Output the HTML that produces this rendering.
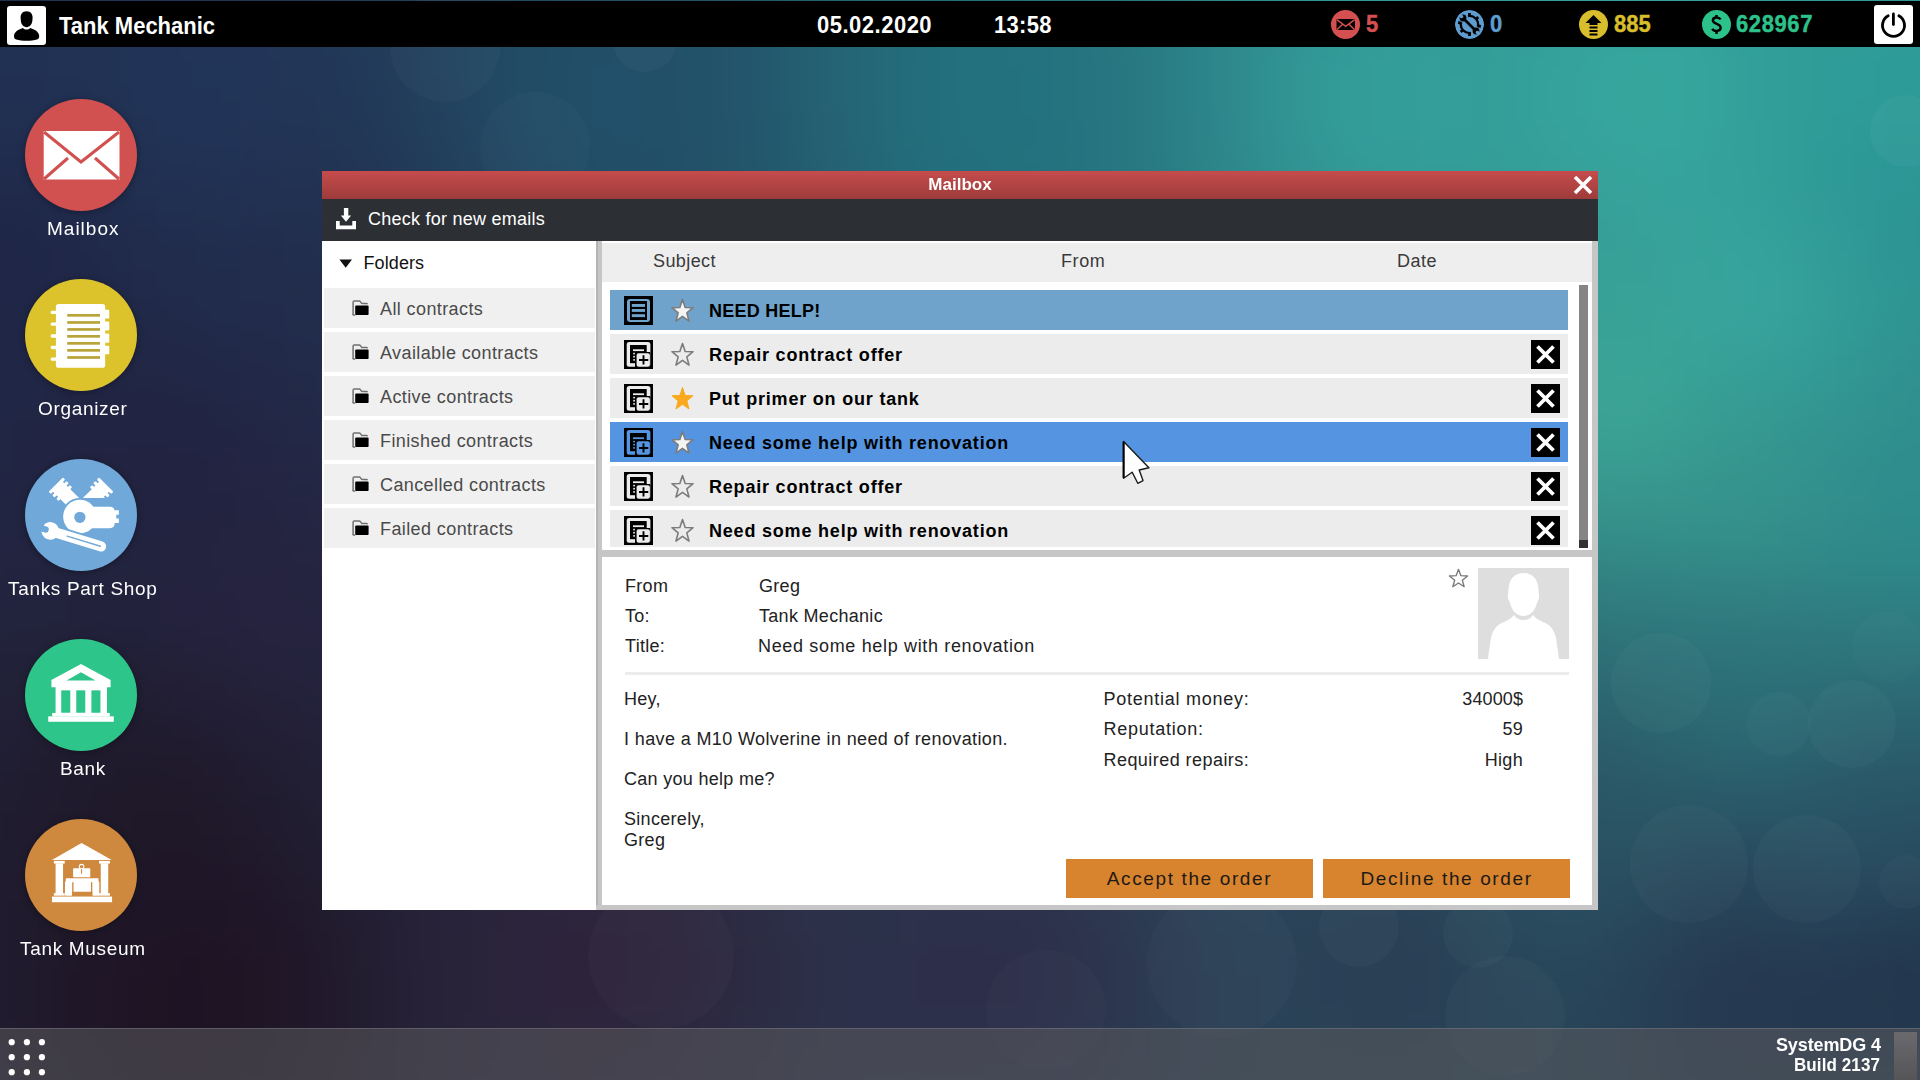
<!DOCTYPE html>
<html><head><meta charset="utf-8">
<style>
*{margin:0;padding:0;box-sizing:border-box}
html,body{width:1920px;height:1080px;overflow:hidden}
body{position:relative;font-family:"Liberation Sans",sans-serif;background:#1d2244}
.a{position:absolute}
svg{position:absolute;display:block}
.t{position:absolute;white-space:nowrap;line-height:1}
#bgg{position:absolute;left:0;top:0;width:1920px;height:1080px;filter:blur(45px)}
#bgg i{position:absolute;width:60px;height:60px}
#bgw{position:absolute;left:0;top:0;width:1920px;height:1080px;overflow:hidden}
.bk{position:absolute;border-radius:50%}
#topbar{left:0;top:1px;width:1920px;height:46px;background:#000}
#taskbar{left:0;top:1028px;width:1920px;height:52px;background:rgba(90,90,93,.56);border-top:1px solid rgba(130,130,140,.45)}
.icon{position:absolute;left:25px;width:112px;height:112px;border-radius:50%;box-shadow:0 1px 7px rgba(0,0,0,.35)}
.icon svg{left:0;top:0}
.lbl{position:absolute;color:#fff;font-size:19px;letter-spacing:.67px;white-space:nowrap;line-height:1}
.stat{position:absolute;top:13px;-webkit-text-stroke:.4px currentColor;transform:scaleY(1.06);transform-origin:0 0;font-size:22px;font-weight:bold;line-height:1;white-space:nowrap}
.row{position:absolute;left:610px;width:958px;overflow:hidden}
.ric{left:14px;top:6px}
.rst{left:60px;top:7.5px}
.rtx{position:absolute;left:99px;top:12px;font-size:18px;font-weight:bold;letter-spacing:.8px;color:#000;white-space:nowrap;line-height:1}
.rx{left:921px;top:6px}
.fitem{position:absolute;left:324px;width:271px;height:40px;background:#f0f0f0}
.fic{left:28px;top:12px}
.fitem span{position:absolute;left:56px;top:12px;font-size:18px;letter-spacing:.4px;color:#4a4a4a;white-space:nowrap;line-height:1}
.hd{position:absolute;top:252px;font-size:18px;letter-spacing:.4px;color:#3a3a3a;line-height:1;white-space:nowrap}
.dt{position:absolute;font-size:18px;color:#222;line-height:1;white-space:nowrap;letter-spacing:.3px}
.btn{position:absolute;top:859px;width:247px;height:39px;background:#d8832e;color:#1e1a16;font-size:19px;letter-spacing:1.62px;line-height:39px;text-align:center;white-space:nowrap}
</style></head><body>
<div id="bgw"><div id="bgg"><i style="left:-120px;top:-120px;background:#223252"></i><i style="left:-60px;top:-120px;background:#223253"></i><i style="left:0px;top:-120px;background:#223253"></i><i style="left:60px;top:-120px;background:#223354"></i><i style="left:120px;top:-120px;background:#223455"></i><i style="left:180px;top:-120px;background:#223656"></i><i style="left:240px;top:-120px;background:#223757"></i><i style="left:300px;top:-120px;background:#223a59"></i><i style="left:360px;top:-120px;background:#223e5b"></i><i style="left:420px;top:-120px;background:#23435e"></i><i style="left:480px;top:-120px;background:#234862"></i><i style="left:540px;top:-120px;background:#234c65"></i><i style="left:600px;top:-120px;background:#234f67"></i><i style="left:660px;top:-120px;background:#235269"></i><i style="left:720px;top:-120px;background:#24576c"></i><i style="left:780px;top:-120px;background:#255e70"></i><i style="left:840px;top:-120px;background:#256575"></i><i style="left:900px;top:-120px;background:#256a79"></i><i style="left:960px;top:-120px;background:#266e7b"></i><i style="left:1020px;top:-120px;background:#27717d"></i><i style="left:1080px;top:-120px;background:#287680"></i><i style="left:1140px;top:-120px;background:#2b7c84"></i><i style="left:1200px;top:-120px;background:#2d8488"></i><i style="left:1260px;top:-120px;background:#2f8b8d"></i><i style="left:1320px;top:-120px;background:#319190"></i><i style="left:1380px;top:-120px;background:#329492"></i><i style="left:1440px;top:-120px;background:#329693"></i><i style="left:1500px;top:-120px;background:#329894"></i><i style="left:1560px;top:-120px;background:#339a95"></i><i style="left:1620px;top:-120px;background:#339b96"></i><i style="left:1680px;top:-120px;background:#329a96"></i><i style="left:1740px;top:-120px;background:#319995"></i><i style="left:1800px;top:-120px;background:#309895"></i><i style="left:1860px;top:-120px;background:#2f9794"></i><i style="left:1920px;top:-120px;background:#2f9694"></i><i style="left:1980px;top:-120px;background:#2e9492"></i><i style="left:2040px;top:-120px;background:#2e9291"></i><i style="left:-120px;top:-60px;background:#213152"></i><i style="left:-60px;top:-60px;background:#213153"></i><i style="left:0px;top:-60px;background:#213253"></i><i style="left:60px;top:-60px;background:#223254"></i><i style="left:120px;top:-60px;background:#223455"></i><i style="left:180px;top:-60px;background:#223557"></i><i style="left:240px;top:-60px;background:#223657"></i><i style="left:300px;top:-60px;background:#223958"></i><i style="left:360px;top:-60px;background:#223d5b"></i><i style="left:420px;top:-60px;background:#22445f"></i><i style="left:480px;top:-60px;background:#224964"></i><i style="left:540px;top:-60px;background:#224d66"></i><i style="left:600px;top:-60px;background:#224f68"></i><i style="left:660px;top:-60px;background:#235169"></i><i style="left:720px;top:-60px;background:#24566c"></i><i style="left:780px;top:-60px;background:#245e71"></i><i style="left:840px;top:-60px;background:#246777"></i><i style="left:900px;top:-60px;background:#246d7b"></i><i style="left:960px;top:-60px;background:#24707d"></i><i style="left:1020px;top:-60px;background:#25727e"></i><i style="left:1080px;top:-60px;background:#277580"></i><i style="left:1140px;top:-60px;background:#2a7d84"></i><i style="left:1200px;top:-60px;background:#2e878a"></i><i style="left:1260px;top:-60px;background:#309090"></i><i style="left:1320px;top:-60px;background:#329695"></i><i style="left:1380px;top:-60px;background:#329996"></i><i style="left:1440px;top:-60px;background:#339a96"></i><i style="left:1500px;top:-60px;background:#339c97"></i><i style="left:1560px;top:-60px;background:#349e99"></i><i style="left:1620px;top:-60px;background:#34a099"></i><i style="left:1680px;top:-60px;background:#339e99"></i><i style="left:1740px;top:-60px;background:#319c97"></i><i style="left:1800px;top:-60px;background:#2f9a96"></i><i style="left:1860px;top:-60px;background:#2e9996"></i><i style="left:1920px;top:-60px;background:#2e9896"></i><i style="left:1980px;top:-60px;background:#2e9694"></i><i style="left:2040px;top:-60px;background:#2e9492"></i><i style="left:-120px;top:0px;background:#213152"></i><i style="left:-60px;top:0px;background:#213153"></i><i style="left:0px;top:0px;background:#213153"></i><i style="left:60px;top:0px;background:#213254"></i><i style="left:120px;top:0px;background:#213457"></i><i style="left:180px;top:0px;background:#223558"></i><i style="left:240px;top:0px;background:#223558"></i><i style="left:300px;top:0px;background:#223758"></i><i style="left:360px;top:0px;background:#223c5a"></i><i style="left:420px;top:0px;background:#224460"></i><i style="left:480px;top:0px;background:#224b65"></i><i style="left:540px;top:0px;background:#224e68"></i><i style="left:600px;top:0px;background:#224f69"></i><i style="left:660px;top:0px;background:#225069"></i><i style="left:720px;top:0px;background:#23556c"></i><i style="left:780px;top:0px;background:#245f71"></i><i style="left:840px;top:0px;background:#246979"></i><i style="left:900px;top:0px;background:#236f7d"></i><i style="left:960px;top:0px;background:#23717f"></i><i style="left:1020px;top:0px;background:#24727f"></i><i style="left:1080px;top:0px;background:#267480"></i><i style="left:1140px;top:0px;background:#2a7d85"></i><i style="left:1200px;top:0px;background:#2e898c"></i><i style="left:1260px;top:0px;background:#319594"></i><i style="left:1320px;top:0px;background:#339c99"></i><i style="left:1380px;top:0px;background:#339e9a"></i><i style="left:1440px;top:0px;background:#339d99"></i><i style="left:1500px;top:0px;background:#349e99"></i><i style="left:1560px;top:0px;background:#35a49c"></i><i style="left:1620px;top:0px;background:#36a69d"></i><i style="left:1680px;top:0px;background:#34a39c"></i><i style="left:1740px;top:0px;background:#319e98"></i><i style="left:1800px;top:0px;background:#2f9b98"></i><i style="left:1860px;top:0px;background:#2e9c98"></i><i style="left:1920px;top:0px;background:#2e9b97"></i><i style="left:1980px;top:0px;background:#2e9895"></i><i style="left:2040px;top:0px;background:#2e9593"></i><i style="left:-120px;top:60px;background:#213051"></i><i style="left:-60px;top:60px;background:#213153"></i><i style="left:0px;top:60px;background:#213153"></i><i style="left:60px;top:60px;background:#213254"></i><i style="left:120px;top:60px;background:#213558"></i><i style="left:180px;top:60px;background:#213559"></i><i style="left:240px;top:60px;background:#223558"></i><i style="left:300px;top:60px;background:#223657"></i><i style="left:360px;top:60px;background:#223b59"></i><i style="left:420px;top:60px;background:#224460"></i><i style="left:480px;top:60px;background:#224c66"></i><i style="left:540px;top:60px;background:#224f69"></i><i style="left:600px;top:60px;background:#224f69"></i><i style="left:660px;top:60px;background:#225069"></i><i style="left:720px;top:60px;background:#23556b"></i><i style="left:780px;top:60px;background:#245f72"></i><i style="left:840px;top:60px;background:#246a79"></i><i style="left:900px;top:60px;background:#23707e"></i><i style="left:960px;top:60px;background:#23717f"></i><i style="left:1020px;top:60px;background:#23727f"></i><i style="left:1080px;top:60px;background:#257480"></i><i style="left:1140px;top:60px;background:#297c84"></i><i style="left:1200px;top:60px;background:#2e8a8d"></i><i style="left:1260px;top:60px;background:#329795"></i><i style="left:1320px;top:60px;background:#339e9b"></i><i style="left:1380px;top:60px;background:#339f9b"></i><i style="left:1440px;top:60px;background:#339e9a"></i><i style="left:1500px;top:60px;background:#34a09a"></i><i style="left:1560px;top:60px;background:#36a79e"></i><i style="left:1620px;top:60px;background:#36a99f"></i><i style="left:1680px;top:60px;background:#35a69d"></i><i style="left:1740px;top:60px;background:#319e99"></i><i style="left:1800px;top:60px;background:#2e9c98"></i><i style="left:1860px;top:60px;background:#2d9d99"></i><i style="left:1920px;top:60px;background:#2d9c98"></i><i style="left:1980px;top:60px;background:#2d9896"></i><i style="left:2040px;top:60px;background:#2d9593"></i><i style="left:-120px;top:120px;background:#212d4e"></i><i style="left:-60px;top:120px;background:#212e4f"></i><i style="left:0px;top:120px;background:#212e50"></i><i style="left:60px;top:120px;background:#212f51"></i><i style="left:120px;top:120px;background:#213356"></i><i style="left:180px;top:120px;background:#213458"></i><i style="left:240px;top:120px;background:#223356"></i><i style="left:300px;top:120px;background:#223454"></i><i style="left:360px;top:120px;background:#223857"></i><i style="left:420px;top:120px;background:#22415d"></i><i style="left:480px;top:120px;background:#224a65"></i><i style="left:540px;top:120px;background:#224f69"></i><i style="left:600px;top:120px;background:#224f69"></i><i style="left:660px;top:120px;background:#225069"></i><i style="left:720px;top:120px;background:#23546b"></i><i style="left:780px;top:120px;background:#245e71"></i><i style="left:840px;top:120px;background:#246978"></i><i style="left:900px;top:120px;background:#236f7e"></i><i style="left:960px;top:120px;background:#23717f"></i><i style="left:1020px;top:120px;background:#23717f"></i><i style="left:1080px;top:120px;background:#267480"></i><i style="left:1140px;top:120px;background:#2a7c84"></i><i style="left:1200px;top:120px;background:#2e898c"></i><i style="left:1260px;top:120px;background:#329594"></i><i style="left:1320px;top:120px;background:#339d99"></i><i style="left:1380px;top:120px;background:#339e9b"></i><i style="left:1440px;top:120px;background:#339d99"></i><i style="left:1500px;top:120px;background:#349f99"></i><i style="left:1560px;top:120px;background:#36a49c"></i><i style="left:1620px;top:120px;background:#36a79e"></i><i style="left:1680px;top:120px;background:#35a49c"></i><i style="left:1740px;top:120px;background:#329e98"></i><i style="left:1800px;top:120px;background:#2e9a97"></i><i style="left:1860px;top:120px;background:#2c9896"></i><i style="left:1920px;top:120px;background:#2b9795"></i><i style="left:1980px;top:120px;background:#2c9695"></i><i style="left:2040px;top:120px;background:#2d9493"></i><i style="left:-120px;top:180px;background:#20294a"></i><i style="left:-60px;top:180px;background:#1f2748"></i><i style="left:0px;top:180px;background:#1f2647"></i><i style="left:60px;top:180px;background:#202a4b"></i><i style="left:120px;top:180px;background:#212e4f"></i><i style="left:180px;top:180px;background:#212f50"></i><i style="left:240px;top:180px;background:#222f4f"></i><i style="left:300px;top:180px;background:#223050"></i><i style="left:360px;top:180px;background:#223553"></i><i style="left:420px;top:180px;background:#223d59"></i><i style="left:480px;top:180px;background:#224560"></i><i style="left:540px;top:180px;background:#224b65"></i><i style="left:600px;top:180px;background:#224d66"></i><i style="left:660px;top:180px;background:#234f67"></i><i style="left:720px;top:180px;background:#245469"></i><i style="left:780px;top:180px;background:#245c6f"></i><i style="left:840px;top:180px;background:#246575"></i><i style="left:900px;top:180px;background:#246c7b"></i><i style="left:960px;top:180px;background:#246f7d"></i><i style="left:1020px;top:180px;background:#25717e"></i><i style="left:1080px;top:180px;background:#27747f"></i><i style="left:1140px;top:180px;background:#2b7c83"></i><i style="left:1200px;top:180px;background:#2e8689"></i><i style="left:1260px;top:180px;background:#319090"></i><i style="left:1320px;top:180px;background:#329795"></i><i style="left:1380px;top:180px;background:#339a96"></i><i style="left:1440px;top:180px;background:#349a96"></i><i style="left:1500px;top:180px;background:#359c96"></i><i style="left:1560px;top:180px;background:#35a098"></i><i style="left:1620px;top:180px;background:#35a19a"></i><i style="left:1680px;top:180px;background:#35a19a"></i><i style="left:1740px;top:180px;background:#339f9a"></i><i style="left:1800px;top:180px;background:#2e9996"></i><i style="left:1860px;top:180px;background:#2a9494"></i><i style="left:1920px;top:180px;background:#2a9494"></i><i style="left:1980px;top:180px;background:#2c9493"></i><i style="left:2040px;top:180px;background:#2d9392"></i><i style="left:-120px;top:240px;background:#1f2848"></i><i style="left:-60px;top:240px;background:#1f2546"></i><i style="left:0px;top:240px;background:#1f2546"></i><i style="left:60px;top:240px;background:#202748"></i><i style="left:120px;top:240px;background:#212b4b"></i><i style="left:180px;top:240px;background:#212c4c"></i><i style="left:240px;top:240px;background:#222c4c"></i><i style="left:300px;top:240px;background:#222d4d"></i><i style="left:360px;top:240px;background:#223150"></i><i style="left:420px;top:240px;background:#223854"></i><i style="left:480px;top:240px;background:#233f5a"></i><i style="left:540px;top:240px;background:#23455f"></i><i style="left:600px;top:240px;background:#234962"></i><i style="left:660px;top:240px;background:#234d64"></i><i style="left:720px;top:240px;background:#245267"></i><i style="left:780px;top:240px;background:#25596c"></i><i style="left:840px;top:240px;background:#256171"></i><i style="left:900px;top:240px;background:#256776"></i><i style="left:960px;top:240px;background:#266c79"></i><i style="left:1020px;top:240px;background:#276f7b"></i><i style="left:1080px;top:240px;background:#29737d"></i><i style="left:1140px;top:240px;background:#2b7a81"></i><i style="left:1200px;top:240px;background:#2e8286"></i><i style="left:1260px;top:240px;background:#308a8b"></i><i style="left:1320px;top:240px;background:#32908f"></i><i style="left:1380px;top:240px;background:#339491"></i><i style="left:1440px;top:240px;background:#349792"></i><i style="left:1500px;top:240px;background:#369b94"></i><i style="left:1560px;top:240px;background:#379e96"></i><i style="left:1620px;top:240px;background:#37a199"></i><i style="left:1680px;top:240px;background:#37a59d"></i><i style="left:1740px;top:240px;background:#37a69e"></i><i style="left:1800px;top:240px;background:#329d98"></i><i style="left:1860px;top:240px;background:#2d9694"></i><i style="left:1920px;top:240px;background:#2c9493"></i><i style="left:1980px;top:240px;background:#2d9392"></i><i style="left:2040px;top:240px;background:#2e9090"></i><i style="left:-120px;top:300px;background:#202847"></i><i style="left:-60px;top:300px;background:#1f2647"></i><i style="left:0px;top:300px;background:#1f2646"></i><i style="left:60px;top:300px;background:#202747"></i><i style="left:120px;top:300px;background:#212948"></i><i style="left:180px;top:300px;background:#212b4b"></i><i style="left:240px;top:300px;background:#222b4b"></i><i style="left:300px;top:300px;background:#222c4b"></i><i style="left:360px;top:300px;background:#222f4d"></i><i style="left:420px;top:300px;background:#223451"></i><i style="left:480px;top:300px;background:#233a55"></i><i style="left:540px;top:300px;background:#23405a"></i><i style="left:600px;top:300px;background:#24455d"></i><i style="left:660px;top:300px;background:#244a61"></i><i style="left:720px;top:300px;background:#254f64"></i><i style="left:780px;top:300px;background:#265669"></i><i style="left:840px;top:300px;background:#265c6d"></i><i style="left:900px;top:300px;background:#276272"></i><i style="left:960px;top:300px;background:#276775"></i><i style="left:1020px;top:300px;background:#286c78"></i><i style="left:1080px;top:300px;background:#2a717b"></i><i style="left:1140px;top:300px;background:#2c777e"></i><i style="left:1200px;top:300px;background:#2e7e82"></i><i style="left:1260px;top:300px;background:#308586"></i><i style="left:1320px;top:300px;background:#328b8a"></i><i style="left:1380px;top:300px;background:#33908d"></i><i style="left:1440px;top:300px;background:#369690"></i><i style="left:1500px;top:300px;background:#389d93"></i><i style="left:1560px;top:300px;background:#3aa296"></i><i style="left:1620px;top:300px;background:#39a297"></i><i style="left:1680px;top:300px;background:#37a49c"></i><i style="left:1740px;top:300px;background:#37a69e"></i><i style="left:1800px;top:300px;background:#349d98"></i><i style="left:1860px;top:300px;background:#309693"></i><i style="left:1920px;top:300px;background:#2f9291"></i><i style="left:1980px;top:300px;background:#2e908f"></i><i style="left:2040px;top:300px;background:#2e8d8d"></i><i style="left:-120px;top:360px;background:#202847"></i><i style="left:-60px;top:360px;background:#202746"></i><i style="left:0px;top:360px;background:#202645"></i><i style="left:60px;top:360px;background:#212543"></i><i style="left:120px;top:360px;background:#212442"></i><i style="left:180px;top:360px;background:#212645"></i><i style="left:240px;top:360px;background:#222948"></i><i style="left:300px;top:360px;background:#222b49"></i><i style="left:360px;top:360px;background:#222d4b"></i><i style="left:420px;top:360px;background:#23314e"></i><i style="left:480px;top:360px;background:#233751"></i><i style="left:540px;top:360px;background:#243c55"></i><i style="left:600px;top:360px;background:#244159"></i><i style="left:660px;top:360px;background:#25465d"></i><i style="left:720px;top:360px;background:#264c61"></i><i style="left:780px;top:360px;background:#265265"></i><i style="left:840px;top:360px;background:#275869"></i><i style="left:900px;top:360px;background:#285e6d"></i><i style="left:960px;top:360px;background:#296371"></i><i style="left:1020px;top:360px;background:#2a6874"></i><i style="left:1080px;top:360px;background:#2b6d77"></i><i style="left:1140px;top:360px;background:#2d737b"></i><i style="left:1200px;top:360px;background:#2e797e"></i><i style="left:1260px;top:360px;background:#307f82"></i><i style="left:1320px;top:360px;background:#328686"></i><i style="left:1380px;top:360px;background:#348d8a"></i><i style="left:1440px;top:360px;background:#36958f"></i><i style="left:1500px;top:360px;background:#3a9f94"></i><i style="left:1560px;top:360px;background:#3da797"></i><i style="left:1620px;top:360px;background:#3da697"></i><i style="left:1680px;top:360px;background:#379e95"></i><i style="left:1740px;top:360px;background:#359b95"></i><i style="left:1800px;top:360px;background:#339692"></i><i style="left:1860px;top:360px;background:#30918f"></i><i style="left:1920px;top:360px;background:#2f8e8d"></i><i style="left:1980px;top:360px;background:#2f8d8c"></i><i style="left:2040px;top:360px;background:#2e8a8b"></i><i style="left:-120px;top:420px;background:#212846"></i><i style="left:-60px;top:420px;background:#212745"></i><i style="left:0px;top:420px;background:#212543"></i><i style="left:60px;top:420px;background:#212341"></i><i style="left:120px;top:420px;background:#212240"></i><i style="left:180px;top:420px;background:#212341"></i><i style="left:240px;top:420px;background:#222644"></i><i style="left:300px;top:420px;background:#222846"></i><i style="left:360px;top:420px;background:#232b48"></i><i style="left:420px;top:420px;background:#232f4a"></i><i style="left:480px;top:420px;background:#24344e"></i><i style="left:540px;top:420px;background:#243952"></i><i style="left:600px;top:420px;background:#253e55"></i><i style="left:660px;top:420px;background:#254359"></i><i style="left:720px;top:420px;background:#26485d"></i><i style="left:780px;top:420px;background:#274e61"></i><i style="left:840px;top:420px;background:#285465"></i><i style="left:900px;top:420px;background:#285969"></i><i style="left:960px;top:420px;background:#295e6c"></i><i style="left:1020px;top:420px;background:#2a6370"></i><i style="left:1080px;top:420px;background:#2b6973"></i><i style="left:1140px;top:420px;background:#2d6e77"></i><i style="left:1200px;top:420px;background:#2e747a"></i><i style="left:1260px;top:420px;background:#2f7a7e"></i><i style="left:1320px;top:420px;background:#318082"></i><i style="left:1380px;top:420px;background:#338786"></i><i style="left:1440px;top:420px;background:#36908b"></i><i style="left:1500px;top:420px;background:#399b91"></i><i style="left:1560px;top:420px;background:#3ca395"></i><i style="left:1620px;top:420px;background:#3aa094"></i><i style="left:1680px;top:420px;background:#36978f"></i><i style="left:1740px;top:420px;background:#35958e"></i><i style="left:1800px;top:420px;background:#32918d"></i><i style="left:1860px;top:420px;background:#2e8e8d"></i><i style="left:1920px;top:420px;background:#2e8d8d"></i><i style="left:1980px;top:420px;background:#2e8b8b"></i><i style="left:2040px;top:420px;background:#2e8788"></i><i style="left:-120px;top:480px;background:#212744"></i><i style="left:-60px;top:480px;background:#212643"></i><i style="left:0px;top:480px;background:#212542"></i><i style="left:60px;top:480px;background:#212341"></i><i style="left:120px;top:480px;background:#212240"></i><i style="left:180px;top:480px;background:#222340"></i><i style="left:240px;top:480px;background:#242441"></i><i style="left:300px;top:480px;background:#242642"></i><i style="left:360px;top:480px;background:#232945"></i><i style="left:420px;top:480px;background:#242d47"></i><i style="left:480px;top:480px;background:#24314b"></i><i style="left:540px;top:480px;background:#25364e"></i><i style="left:600px;top:480px;background:#253b52"></i><i style="left:660px;top:480px;background:#264056"></i><i style="left:720px;top:480px;background:#27455a"></i><i style="left:780px;top:480px;background:#274a5d"></i><i style="left:840px;top:480px;background:#284f61"></i><i style="left:900px;top:480px;background:#295465"></i><i style="left:960px;top:480px;background:#2a5968"></i><i style="left:1020px;top:480px;background:#2b5e6c"></i><i style="left:1080px;top:480px;background:#2c636f"></i><i style="left:1140px;top:480px;background:#2d6872"></i><i style="left:1200px;top:480px;background:#2e6e76"></i><i style="left:1260px;top:480px;background:#2f7379"></i><i style="left:1320px;top:480px;background:#30797d"></i><i style="left:1380px;top:480px;background:#328081"></i><i style="left:1440px;top:480px;background:#338785"></i><i style="left:1500px;top:480px;background:#358f8a"></i><i style="left:1560px;top:480px;background:#37948d"></i><i style="left:1620px;top:480px;background:#36938c"></i><i style="left:1680px;top:480px;background:#35948d"></i><i style="left:1740px;top:480px;background:#35958d"></i><i style="left:1800px;top:480px;background:#318e8c"></i><i style="left:1860px;top:480px;background:#2e8d8d"></i><i style="left:1920px;top:480px;background:#2e8d8d"></i><i style="left:1980px;top:480px;background:#2e898a"></i><i style="left:2040px;top:480px;background:#2e8486"></i><i style="left:-120px;top:540px;background:#212642"></i><i style="left:-60px;top:540px;background:#212540"></i><i style="left:0px;top:540px;background:#222440"></i><i style="left:60px;top:540px;background:#22233f"></i><i style="left:120px;top:540px;background:#23233f"></i><i style="left:180px;top:540px;background:#252340"></i><i style="left:240px;top:540px;background:#252340"></i><i style="left:300px;top:540px;background:#252440"></i><i style="left:360px;top:540px;background:#242742"></i><i style="left:420px;top:540px;background:#242b45"></i><i style="left:480px;top:540px;background:#242f48"></i><i style="left:540px;top:540px;background:#25334b"></i><i style="left:600px;top:540px;background:#26384f"></i><i style="left:660px;top:540px;background:#273c52"></i><i style="left:720px;top:540px;background:#274156"></i><i style="left:780px;top:540px;background:#28465a"></i><i style="left:840px;top:540px;background:#294b5d"></i><i style="left:900px;top:540px;background:#294f61"></i><i style="left:960px;top:540px;background:#2a5464"></i><i style="left:1020px;top:540px;background:#2b5967"></i><i style="left:1080px;top:540px;background:#2c5d6b"></i><i style="left:1140px;top:540px;background:#2c626e"></i><i style="left:1200px;top:540px;background:#2d6771"></i><i style="left:1260px;top:540px;background:#2e6c74"></i><i style="left:1320px;top:540px;background:#2f7177"></i><i style="left:1380px;top:540px;background:#30767a"></i><i style="left:1440px;top:540px;background:#317b7e"></i><i style="left:1500px;top:540px;background:#328081"></i><i style="left:1560px;top:540px;background:#328483"></i><i style="left:1620px;top:540px;background:#328685"></i><i style="left:1680px;top:540px;background:#338a87"></i><i style="left:1740px;top:540px;background:#338b88"></i><i style="left:1800px;top:540px;background:#308787"></i><i style="left:1860px;top:540px;background:#2e8989"></i><i style="left:1920px;top:540px;background:#2e8889"></i><i style="left:1980px;top:540px;background:#2e8386"></i><i style="left:2040px;top:540px;background:#2e7f82"></i><i style="left:-120px;top:600px;background:#21253f"></i><i style="left:-60px;top:600px;background:#21243d"></i><i style="left:0px;top:600px;background:#22233c"></i><i style="left:60px;top:600px;background:#22223b"></i><i style="left:120px;top:600px;background:#23223c"></i><i style="left:180px;top:600px;background:#25223f"></i><i style="left:240px;top:600px;background:#25233f"></i><i style="left:300px;top:600px;background:#25233f"></i><i style="left:360px;top:600px;background:#242640"></i><i style="left:420px;top:600px;background:#242943"></i><i style="left:480px;top:600px;background:#252d46"></i><i style="left:540px;top:600px;background:#263149"></i><i style="left:600px;top:600px;background:#27354c"></i><i style="left:660px;top:600px;background:#27394f"></i><i style="left:720px;top:600px;background:#283d53"></i><i style="left:780px;top:600px;background:#294256"></i><i style="left:840px;top:600px;background:#294659"></i><i style="left:900px;top:600px;background:#2a4a5c"></i><i style="left:960px;top:600px;background:#2a4e5f"></i><i style="left:1020px;top:600px;background:#2b5263"></i><i style="left:1080px;top:600px;background:#2c5766"></i><i style="left:1140px;top:600px;background:#2c5c69"></i><i style="left:1200px;top:600px;background:#2d606c"></i><i style="left:1260px;top:600px;background:#2d646f"></i><i style="left:1320px;top:600px;background:#2e6871"></i><i style="left:1380px;top:600px;background:#2e6b73"></i><i style="left:1440px;top:600px;background:#2e6f76"></i><i style="left:1500px;top:600px;background:#2f7278"></i><i style="left:1560px;top:600px;background:#2f7479"></i><i style="left:1620px;top:600px;background:#2e767b"></i><i style="left:1680px;top:600px;background:#2e757b"></i><i style="left:1740px;top:600px;background:#2d757b"></i><i style="left:1800px;top:600px;background:#2e787d"></i><i style="left:1860px;top:600px;background:#2e7a7f"></i><i style="left:1920px;top:600px;background:#2d7b7f"></i><i style="left:1980px;top:600px;background:#2d797e"></i><i style="left:2040px;top:600px;background:#2d767c"></i><i style="left:-120px;top:660px;background:#21243c"></i><i style="left:-60px;top:660px;background:#212239"></i><i style="left:0px;top:660px;background:#212036"></i><i style="left:60px;top:660px;background:#211e34"></i><i style="left:120px;top:660px;background:#211e34"></i><i style="left:180px;top:660px;background:#232038"></i><i style="left:240px;top:660px;background:#24223c"></i><i style="left:300px;top:660px;background:#24233d"></i><i style="left:360px;top:660px;background:#24253e"></i><i style="left:420px;top:660px;background:#252841"></i><i style="left:480px;top:660px;background:#262b43"></i><i style="left:540px;top:660px;background:#272e46"></i><i style="left:600px;top:660px;background:#283248"></i><i style="left:660px;top:660px;background:#28354c"></i><i style="left:720px;top:660px;background:#29394f"></i><i style="left:780px;top:660px;background:#293d52"></i><i style="left:840px;top:660px;background:#2a4155"></i><i style="left:900px;top:660px;background:#2a4458"></i><i style="left:960px;top:660px;background:#2b475b"></i><i style="left:1020px;top:660px;background:#2b4b5e"></i><i style="left:1080px;top:660px;background:#2b5061"></i><i style="left:1140px;top:660px;background:#2c5564"></i><i style="left:1200px;top:660px;background:#2c5967"></i><i style="left:1260px;top:660px;background:#2c5c69"></i><i style="left:1320px;top:660px;background:#2c5f6b"></i><i style="left:1380px;top:660px;background:#2c616c"></i><i style="left:1440px;top:660px;background:#2d636e"></i><i style="left:1500px;top:660px;background:#2c656f"></i><i style="left:1560px;top:660px;background:#2c6771"></i><i style="left:1620px;top:660px;background:#2c6b73"></i><i style="left:1680px;top:660px;background:#2c6f77"></i><i style="left:1740px;top:660px;background:#2c6f77"></i><i style="left:1800px;top:660px;background:#2c6d76"></i><i style="left:1860px;top:660px;background:#2c6b74"></i><i style="left:1920px;top:660px;background:#2c6b75"></i><i style="left:1980px;top:660px;background:#2c6c75"></i><i style="left:2040px;top:660px;background:#2c6c75"></i><i style="left:-120px;top:720px;background:#212239"></i><i style="left:-60px;top:720px;background:#212035"></i><i style="left:0px;top:720px;background:#201d31"></i><i style="left:60px;top:720px;background:#1f1a2c"></i><i style="left:120px;top:720px;background:#1f1929"></i><i style="left:180px;top:720px;background:#201a2c"></i><i style="left:240px;top:720px;background:#211e33"></i><i style="left:300px;top:720px;background:#232138"></i><i style="left:360px;top:720px;background:#24243b"></i><i style="left:420px;top:720px;background:#25273e"></i><i style="left:480px;top:720px;background:#272941"></i><i style="left:540px;top:720px;background:#282c43"></i><i style="left:600px;top:720px;background:#292e45"></i><i style="left:660px;top:720px;background:#293148"></i><i style="left:720px;top:720px;background:#2a354b"></i><i style="left:780px;top:720px;background:#2a394f"></i><i style="left:840px;top:720px;background:#2b3c52"></i><i style="left:900px;top:720px;background:#2b3e54"></i><i style="left:960px;top:720px;background:#2b4056"></i><i style="left:1020px;top:720px;background:#2c4458"></i><i style="left:1080px;top:720px;background:#2c495c"></i><i style="left:1140px;top:720px;background:#2c4e5f"></i><i style="left:1200px;top:720px;background:#2b5262"></i><i style="left:1260px;top:720px;background:#2b5463"></i><i style="left:1320px;top:720px;background:#2b5664"></i><i style="left:1380px;top:720px;background:#2b5766"></i><i style="left:1440px;top:720px;background:#2b5967"></i><i style="left:1500px;top:720px;background:#2b5a68"></i><i style="left:1560px;top:720px;background:#2b5a68"></i><i style="left:1620px;top:720px;background:#2b5f6b"></i><i style="left:1680px;top:720px;background:#2b6872"></i><i style="left:1740px;top:720px;background:#2b6a74"></i><i style="left:1800px;top:720px;background:#2b616e"></i><i style="left:1860px;top:720px;background:#2a5c6b"></i><i style="left:1920px;top:720px;background:#2a5d6b"></i><i style="left:1980px;top:720px;background:#2a5f6c"></i><i style="left:2040px;top:720px;background:#2a616d"></i><i style="left:-120px;top:780px;background:#212136"></i><i style="left:-60px;top:780px;background:#201e32"></i><i style="left:0px;top:780px;background:#201b2e"></i><i style="left:60px;top:780px;background:#1f192a"></i><i style="left:120px;top:780px;background:#1f1828"></i><i style="left:180px;top:780px;background:#1f1829"></i><i style="left:240px;top:780px;background:#201b2e"></i><i style="left:300px;top:780px;background:#221f33"></i><i style="left:360px;top:780px;background:#242238"></i><i style="left:420px;top:780px;background:#26253c"></i><i style="left:480px;top:780px;background:#28273e"></i><i style="left:540px;top:780px;background:#2a2840"></i><i style="left:600px;top:780px;background:#2b2a41"></i><i style="left:660px;top:780px;background:#2b2d44"></i><i style="left:720px;top:780px;background:#2b3148"></i><i style="left:780px;top:780px;background:#2b354c"></i><i style="left:840px;top:780px;background:#2b374e"></i><i style="left:900px;top:780px;background:#2c3850"></i><i style="left:960px;top:780px;background:#2c3950"></i><i style="left:1020px;top:780px;background:#2c3b53"></i><i style="left:1080px;top:780px;background:#2c4156"></i><i style="left:1140px;top:780px;background:#2b475a"></i><i style="left:1200px;top:780px;background:#2b4b5d"></i><i style="left:1260px;top:780px;background:#2b4c5e"></i><i style="left:1320px;top:780px;background:#2a4d5e"></i><i style="left:1380px;top:780px;background:#2a4e5f"></i><i style="left:1440px;top:780px;background:#2a5162"></i><i style="left:1500px;top:780px;background:#2a5463"></i><i style="left:1560px;top:780px;background:#2a5464"></i><i style="left:1620px;top:780px;background:#2a5464"></i><i style="left:1680px;top:780px;background:#2a5666"></i><i style="left:1740px;top:780px;background:#295667"></i><i style="left:1800px;top:780px;background:#295265"></i><i style="left:1860px;top:780px;background:#295265"></i><i style="left:1920px;top:780px;background:#295264"></i><i style="left:1980px;top:780px;background:#295465"></i><i style="left:2040px;top:780px;background:#295867"></i><i style="left:-120px;top:840px;background:#212035"></i><i style="left:-60px;top:840px;background:#201d31"></i><i style="left:0px;top:840px;background:#201b2d"></i><i style="left:60px;top:840px;background:#1f192a"></i><i style="left:120px;top:840px;background:#1f1828"></i><i style="left:180px;top:840px;background:#1f1829"></i><i style="left:240px;top:840px;background:#20192b"></i><i style="left:300px;top:840px;background:#211d30"></i><i style="left:360px;top:840px;background:#242136"></i><i style="left:420px;top:840px;background:#27243b"></i><i style="left:480px;top:840px;background:#2a263d"></i><i style="left:540px;top:840px;background:#2c253d"></i><i style="left:600px;top:840px;background:#2c263d"></i><i style="left:660px;top:840px;background:#2c2940"></i><i style="left:720px;top:840px;background:#2b2e45"></i><i style="left:780px;top:840px;background:#2b324a"></i><i style="left:840px;top:840px;background:#2c344c"></i><i style="left:900px;top:840px;background:#2d324c"></i><i style="left:960px;top:840px;background:#2d324c"></i><i style="left:1020px;top:840px;background:#2d344e"></i><i style="left:1080px;top:840px;background:#2c3a52"></i><i style="left:1140px;top:840px;background:#2c4157"></i><i style="left:1200px;top:840px;background:#2b465a"></i><i style="left:1260px;top:840px;background:#2a465a"></i><i style="left:1320px;top:840px;background:#2a4458"></i><i style="left:1380px;top:840px;background:#2a4458"></i><i style="left:1440px;top:840px;background:#2a4a5c"></i><i style="left:1500px;top:840px;background:#295061"></i><i style="left:1560px;top:840px;background:#295363"></i><i style="left:1620px;top:840px;background:#295162"></i><i style="left:1680px;top:840px;background:#28485c"></i><i style="left:1740px;top:840px;background:#284a5e"></i><i style="left:1800px;top:840px;background:#295064"></i><i style="left:1860px;top:840px;background:#294e62"></i><i style="left:1920px;top:840px;background:#27495c"></i><i style="left:1980px;top:840px;background:#274b5e"></i><i style="left:2040px;top:840px;background:#285061"></i><i style="left:-120px;top:900px;background:#212034"></i><i style="left:-60px;top:900px;background:#201d30"></i><i style="left:0px;top:900px;background:#1f1a2c"></i><i style="left:60px;top:900px;background:#1f1728"></i><i style="left:120px;top:900px;background:#1e1425"></i><i style="left:180px;top:900px;background:#1e1324"></i><i style="left:240px;top:900px;background:#1f1627"></i><i style="left:300px;top:900px;background:#211a2d"></i><i style="left:360px;top:900px;background:#242034"></i><i style="left:420px;top:900px;background:#28243a"></i><i style="left:480px;top:900px;background:#2c243c"></i><i style="left:540px;top:900px;background:#2d243c"></i><i style="left:600px;top:900px;background:#2d243c"></i><i style="left:660px;top:900px;background:#2d263e"></i><i style="left:720px;top:900px;background:#2c2b43"></i><i style="left:780px;top:900px;background:#2c3048"></i><i style="left:840px;top:900px;background:#2c314b"></i><i style="left:900px;top:900px;background:#2d2f4a"></i><i style="left:960px;top:900px;background:#2d2e4a"></i><i style="left:1020px;top:900px;background:#2d2f4b"></i><i style="left:1080px;top:900px;background:#2d354e"></i><i style="left:1140px;top:900px;background:#2c3e54"></i><i style="left:1200px;top:900px;background:#2b4358"></i><i style="left:1260px;top:900px;background:#2a4257"></i><i style="left:1320px;top:900px;background:#2a3f55"></i><i style="left:1380px;top:900px;background:#2a3e54"></i><i style="left:1440px;top:900px;background:#294357"></i><i style="left:1500px;top:900px;background:#294a5d"></i><i style="left:1560px;top:900px;background:#294b5e"></i><i style="left:1620px;top:900px;background:#284257"></i><i style="left:1680px;top:900px;background:#273c54"></i><i style="left:1740px;top:900px;background:#263d53"></i><i style="left:1800px;top:900px;background:#264157"></i><i style="left:1860px;top:900px;background:#23374e"></i><i style="left:1920px;top:900px;background:#233a50"></i><i style="left:1980px;top:900px;background:#254257"></i><i style="left:2040px;top:900px;background:#274a5c"></i><i style="left:-120px;top:960px;background:#212033"></i><i style="left:-60px;top:960px;background:#201d2f"></i><i style="left:0px;top:960px;background:#1f192b"></i><i style="left:60px;top:960px;background:#1f1627"></i><i style="left:120px;top:960px;background:#1e1223"></i><i style="left:180px;top:960px;background:#1e1222"></i><i style="left:240px;top:960px;background:#1e1424"></i><i style="left:300px;top:960px;background:#20192b"></i><i style="left:360px;top:960px;background:#241f33"></i><i style="left:420px;top:960px;background:#28233a"></i><i style="left:480px;top:960px;background:#2c243c"></i><i style="left:540px;top:960px;background:#2d243c"></i><i style="left:600px;top:960px;background:#2d243c"></i><i style="left:660px;top:960px;background:#2d263e"></i><i style="left:720px;top:960px;background:#2c2b43"></i><i style="left:780px;top:960px;background:#2c3048"></i><i style="left:840px;top:960px;background:#2d314b"></i><i style="left:900px;top:960px;background:#2d2f4a"></i><i style="left:960px;top:960px;background:#2d2e4a"></i><i style="left:1020px;top:960px;background:#2d2f4a"></i><i style="left:1080px;top:960px;background:#2d344e"></i><i style="left:1140px;top:960px;background:#2c3c53"></i><i style="left:1200px;top:960px;background:#2b4257"></i><i style="left:1260px;top:960px;background:#2a4256"></i><i style="left:1320px;top:960px;background:#2a3f54"></i><i style="left:1380px;top:960px;background:#2a3e54"></i><i style="left:1440px;top:960px;background:#294156"></i><i style="left:1500px;top:960px;background:#29465a"></i><i style="left:1560px;top:960px;background:#284559"></i><i style="left:1620px;top:960px;background:#273e55"></i><i style="left:1680px;top:960px;background:#263950"></i><i style="left:1740px;top:960px;background:#24344c"></i><i style="left:1800px;top:960px;background:#243950"></i><i style="left:1860px;top:960px;background:#22324a"></i><i style="left:1920px;top:960px;background:#22354d"></i><i style="left:1980px;top:960px;background:#243e54"></i><i style="left:2040px;top:960px;background:#26465a"></i><i style="left:-120px;top:1020px;background:#212034"></i><i style="left:-60px;top:1020px;background:#201d30"></i><i style="left:0px;top:1020px;background:#201a2c"></i><i style="left:60px;top:1020px;background:#1f1627"></i><i style="left:120px;top:1020px;background:#1e1324"></i><i style="left:180px;top:1020px;background:#1e1323"></i><i style="left:240px;top:1020px;background:#1f1525"></i><i style="left:300px;top:1020px;background:#211a2c"></i><i style="left:360px;top:1020px;background:#241f33"></i><i style="left:420px;top:1020px;background:#282439"></i><i style="left:480px;top:1020px;background:#2b253c"></i><i style="left:540px;top:1020px;background:#2c253c"></i><i style="left:600px;top:1020px;background:#2d253d"></i><i style="left:660px;top:1020px;background:#2c283f"></i><i style="left:720px;top:1020px;background:#2c2c44"></i><i style="left:780px;top:1020px;background:#2c3048"></i><i style="left:840px;top:1020px;background:#2c314b"></i><i style="left:900px;top:1020px;background:#2d304b"></i><i style="left:960px;top:1020px;background:#2d2f4b"></i><i style="left:1020px;top:1020px;background:#2d314c"></i><i style="left:1080px;top:1020px;background:#2c364f"></i><i style="left:1140px;top:1020px;background:#2b3d53"></i><i style="left:1200px;top:1020px;background:#2b4257"></i><i style="left:1260px;top:1020px;background:#2a4257"></i><i style="left:1320px;top:1020px;background:#2a4156"></i><i style="left:1380px;top:1020px;background:#294156"></i><i style="left:1440px;top:1020px;background:#294358"></i><i style="left:1500px;top:1020px;background:#294559"></i><i style="left:1560px;top:1020px;background:#284458"></i><i style="left:1620px;top:1020px;background:#273f55"></i><i style="left:1680px;top:1020px;background:#253a51"></i><i style="left:1740px;top:1020px;background:#25384f"></i><i style="left:1800px;top:1020px;background:#243a51"></i><i style="left:1860px;top:1020px;background:#23384f"></i><i style="left:1920px;top:1020px;background:#243a50"></i><i style="left:1980px;top:1020px;background:#254055"></i><i style="left:2040px;top:1020px;background:#264659"></i><i style="left:-120px;top:1080px;background:#212135"></i><i style="left:-60px;top:1080px;background:#211e31"></i><i style="left:0px;top:1080px;background:#201b2e"></i><i style="left:60px;top:1080px;background:#1f192a"></i><i style="left:120px;top:1080px;background:#1f1628"></i><i style="left:180px;top:1080px;background:#1f1627"></i><i style="left:240px;top:1080px;background:#20182a"></i><i style="left:300px;top:1080px;background:#211c2f"></i><i style="left:360px;top:1080px;background:#242135"></i><i style="left:420px;top:1080px;background:#27253a"></i><i style="left:480px;top:1080px;background:#2a263d"></i><i style="left:540px;top:1080px;background:#2b273e"></i><i style="left:600px;top:1080px;background:#2b283f"></i><i style="left:660px;top:1080px;background:#2b2b42"></i><i style="left:720px;top:1080px;background:#2b2e45"></i><i style="left:780px;top:1080px;background:#2b3249"></i><i style="left:840px;top:1080px;background:#2c334b"></i><i style="left:900px;top:1080px;background:#2c334c"></i><i style="left:960px;top:1080px;background:#2d334d"></i><i style="left:1020px;top:1080px;background:#2c354e"></i><i style="left:1080px;top:1080px;background:#2c3951"></i><i style="left:1140px;top:1080px;background:#2b3e54"></i><i style="left:1200px;top:1080px;background:#2a4257"></i><i style="left:1260px;top:1080px;background:#2a4458"></i><i style="left:1320px;top:1080px;background:#2a4458"></i><i style="left:1380px;top:1080px;background:#294458"></i><i style="left:1440px;top:1080px;background:#294559"></i><i style="left:1500px;top:1080px;background:#28465a"></i><i style="left:1560px;top:1080px;background:#284458"></i><i style="left:1620px;top:1080px;background:#274156"></i><i style="left:1680px;top:1080px;background:#263e54"></i><i style="left:1740px;top:1080px;background:#263d53"></i><i style="left:1800px;top:1080px;background:#253e53"></i><i style="left:1860px;top:1080px;background:#253e53"></i><i style="left:1920px;top:1080px;background:#253f54"></i><i style="left:1980px;top:1080px;background:#264357"></i><i style="left:2040px;top:1080px;background:#26475a"></i><i style="left:-120px;top:1140px;background:#212236"></i><i style="left:-60px;top:1140px;background:#212033"></i><i style="left:0px;top:1140px;background:#211e30"></i><i style="left:60px;top:1140px;background:#201c2e"></i><i style="left:120px;top:1140px;background:#201a2c"></i><i style="left:180px;top:1140px;background:#201a2c"></i><i style="left:240px;top:1140px;background:#211c2e"></i><i style="left:300px;top:1140px;background:#221f32"></i><i style="left:360px;top:1140px;background:#242337"></i><i style="left:420px;top:1140px;background:#27263b"></i><i style="left:480px;top:1140px;background:#28283e"></i><i style="left:540px;top:1140px;background:#2a2a40"></i><i style="left:600px;top:1140px;background:#2a2b42"></i><i style="left:660px;top:1140px;background:#2b2e44"></i><i style="left:720px;top:1140px;background:#2b3147"></i><i style="left:780px;top:1140px;background:#2b334a"></i><i style="left:840px;top:1140px;background:#2b354d"></i><i style="left:900px;top:1140px;background:#2c364e"></i><i style="left:960px;top:1140px;background:#2c374f"></i><i style="left:1020px;top:1140px;background:#2c3951"></i><i style="left:1080px;top:1140px;background:#2b3d53"></i><i style="left:1140px;top:1140px;background:#2b4056"></i><i style="left:1200px;top:1140px;background:#2a4358"></i><i style="left:1260px;top:1140px;background:#2a4559"></i><i style="left:1320px;top:1140px;background:#2a4659"></i><i style="left:1380px;top:1140px;background:#29465a"></i><i style="left:1440px;top:1140px;background:#29475a"></i><i style="left:1500px;top:1140px;background:#28475a"></i><i style="left:1560px;top:1140px;background:#284659"></i><i style="left:1620px;top:1140px;background:#274458"></i><i style="left:1680px;top:1140px;background:#274257"></i><i style="left:1740px;top:1140px;background:#264156"></i><i style="left:1800px;top:1140px;background:#264156"></i><i style="left:1860px;top:1140px;background:#264256"></i><i style="left:1920px;top:1140px;background:#264357"></i><i style="left:1980px;top:1140px;background:#264659"></i><i style="left:2040px;top:1140px;background:#27495c"></i><i style="left:-120px;top:1200px;background:#222438"></i><i style="left:-60px;top:1200px;background:#222236"></i><i style="left:0px;top:1200px;background:#212134"></i><i style="left:60px;top:1200px;background:#211f32"></i><i style="left:120px;top:1200px;background:#211f31"></i><i style="left:180px;top:1200px;background:#211f31"></i><i style="left:240px;top:1200px;background:#222033"></i><i style="left:300px;top:1200px;background:#232336"></i><i style="left:360px;top:1200px;background:#25253a"></i><i style="left:420px;top:1200px;background:#26283d"></i><i style="left:480px;top:1200px;background:#282a40"></i><i style="left:540px;top:1200px;background:#292c42"></i><i style="left:600px;top:1200px;background:#292e44"></i><i style="left:660px;top:1200px;background:#2a3046"></i><i style="left:720px;top:1200px;background:#2a3349"></i><i style="left:780px;top:1200px;background:#2a354c"></i><i style="left:840px;top:1200px;background:#2b374e"></i><i style="left:900px;top:1200px;background:#2b394f"></i><i style="left:960px;top:1200px;background:#2b3b51"></i><i style="left:1020px;top:1200px;background:#2b3d53"></i><i style="left:1080px;top:1200px;background:#2b3f55"></i><i style="left:1140px;top:1200px;background:#2b4257"></i><i style="left:1200px;top:1200px;background:#2a4558"></i><i style="left:1260px;top:1200px;background:#2a465a"></i><i style="left:1320px;top:1200px;background:#2a475a"></i><i style="left:1380px;top:1200px;background:#29485b"></i><i style="left:1440px;top:1200px;background:#29485b"></i><i style="left:1500px;top:1200px;background:#29485b"></i><i style="left:1560px;top:1200px;background:#28475a"></i><i style="left:1620px;top:1200px;background:#28465a"></i><i style="left:1680px;top:1200px;background:#274559"></i><i style="left:1740px;top:1200px;background:#274458"></i><i style="left:1800px;top:1200px;background:#274558"></i><i style="left:1860px;top:1200px;background:#274559"></i><i style="left:1920px;top:1200px;background:#27465a"></i><i style="left:1980px;top:1200px;background:#27485b"></i><i style="left:2040px;top:1200px;background:#274b5d"></i></div></div>
<div class="bk" style="left:1870px;top:95px;width:72px;height:72px;background:rgba(255,255,255,0.033)"></div><div class="bk" style="left:1611px;top:633px;width:100px;height:100px;background:rgba(255,255,255,0.028)"></div><div class="bk" style="left:1808px;top:680px;width:88px;height:88px;background:rgba(255,255,255,0.028)"></div><div class="bk" style="left:1747px;top:692px;width:64px;height:64px;background:rgba(255,255,255,0.022)"></div><div class="bk" style="left:1630px;top:805px;width:118px;height:118px;background:rgba(255,255,255,0.022)"></div><div class="bk" style="left:1753px;top:815px;width:108px;height:108px;background:rgba(255,255,255,0.022)"></div><div class="bk" style="left:1879px;top:855px;width:54px;height:54px;background:rgba(255,255,255,0.022)"></div><div class="bk" style="left:1852px;top:611px;width:72px;height:72px;background:rgba(255,255,255,0.017)"></div><div class="bk" style="left:588px;top:883px;width:146px;height:146px;background:rgba(255,255,255,0.019)"></div><div class="bk" style="left:1147px;top:888px;width:150px;height:150px;background:rgba(255,255,255,0.019)"></div><div class="bk" style="left:1319px;top:887px;width:80px;height:80px;background:rgba(255,255,255,0.028)"></div><div class="bk" style="left:1443px;top:898px;width:70px;height:70px;background:rgba(255,255,255,0.028)"></div><div class="bk" style="left:1445px;top:956px;width:120px;height:120px;background:rgba(255,255,255,0.022)"></div><div class="bk" style="left:986px;top:950px;width:120px;height:120px;background:rgba(255,255,255,0.017)"></div><div class="bk" style="left:390px;top:-8px;width:110px;height:110px;background:rgba(255,255,255,0.022)"></div><div class="bk" style="left:613px;top:8px;width:64px;height:64px;background:rgba(255,255,255,0.033)"></div><div class="bk" style="left:480px;top:92px;width:110px;height:110px;background:rgba(255,255,255,0.019)"></div>
<div id="topbar" class="a"></div>
<!-- avatar -->
<div class="a" style="left:7px;top:6px;width:39px;height:39px;background:#fff;border-radius:3px"></div>
<svg style="left:7px;top:6px" width="39" height="39" viewBox="0 0 39 39"><path d="M19.6 5.3C15.4 5.3 13.6 8.2 13.6 11.6C13.6 12.7 13.8 13.5 13.8 14.1C13.8 17.8 16.3 21.3 19.6 21.3C22.9 21.3 25.4 17.8 25.4 14.1C25.4 13.5 25.6 12.7 25.6 11.6C25.6 8.2 23.8 5.3 19.6 5.3ZM16 21.9C10.5 23.4 7 26.6 7 30C7 32 7.6 32.8 9.2 33.4C12 34.3 15.8 34.8 19.6 34.8C23.4 34.8 27.2 34.3 30 33.4C31.6 32.8 32.2 32 32.2 30C32.2 26.6 28.7 23.4 23.2 21.9C22.2 23 21.1 23.6 19.6 23.6C18.1 23.6 17 23 16 21.9Z" fill="#000"/></svg>
<div class="t" style="left:59px;top:15px;font-size:22px;font-weight:bold;color:#fff;transform:scaleY(1.06);transform-origin:0 0">Tank Mechanic</div>
<div class="t" style="left:817px;top:14px;font-size:22px;font-weight:bold;color:#fff;letter-spacing:.5px;transform:scaleY(1.08);transform-origin:0 0">05.02.2020</div>
<div class="t" style="left:994px;top:14px;font-size:22px;font-weight:bold;color:#fff;letter-spacing:.3px;transform:scaleY(1.08);transform-origin:0 0">13:58</div>

<!-- status -->
<svg style="left:1331px;top:10px" width="29" height="29" viewBox="0 0 29 29"><circle cx="14.5" cy="14.5" r="14.5" fill="#d45050"/><rect x="5.5" y="9" width="18.5" height="11" fill="#000"/><path d="M5.8 9.6L14.7 16.4L23.7 9.6M5.8 19.8L11.3 14.6M23.7 19.8L18.2 14.6" stroke="#d45050" stroke-width="1.4" fill="none"/></svg>
<div class="stat" style="left:1366px;color:#d45050">5</div>
<svg style="left:1455px;top:10px" width="29" height="29" viewBox="0 0 29 29"><circle cx="14.5" cy="14.5" r="14.5" fill="#5f9ccf"/><path d="M13.01 6.03A8.6 8.6 0 0 1 22.81 16.73M15.99 22.97A8.6 8.6 0 0 1 6.19 12.27" stroke="#000" stroke-width="2.3" fill="none"/><rect x="13.10" y="3.00" width="2.8" height="3" transform="rotate(0 14.50 4.50)" fill="#000"/><rect x="20.76" y="6.57" width="2.8" height="3" transform="rotate(50 22.16 8.07)" fill="#000"/><rect x="22.95" y="14.74" width="2.8" height="3" transform="rotate(100 24.35 16.24)" fill="#000"/><rect x="13.10" y="23.00" width="2.8" height="3" transform="rotate(180 14.50 24.50)" fill="#000"/><rect x="5.44" y="19.43" width="2.8" height="3" transform="rotate(230 6.84 20.93)" fill="#000"/><rect x="3.25" y="11.26" width="2.8" height="3" transform="rotate(280 4.65 12.76)" fill="#000"/><path d="M8 8L21 21" stroke="#5f9ccf" stroke-width="5"/><path d="M8 8L21 21" stroke="#000" stroke-width="2.7"/><circle cx="8" cy="8" r="3.4" fill="#000"/><circle cx="21" cy="21" r="3.4" fill="#000"/><circle cx="6.6" cy="6.6" r="1.7" fill="#5f9ccf"/><circle cx="22.4" cy="22.4" r="1.7" fill="#5f9ccf"/><path d="M6.6 6.6L4 4M22.4 22.4L25 25" stroke="#5f9ccf" stroke-width="3"/><circle cx="14.5" cy="14.5" r="16.5" fill="none" stroke="#000" stroke-width="4"/></svg>
<div class="stat" style="left:1490px;color:#5f9ccf">0</div>
<svg style="left:1579px;top:10px" width="29" height="29" viewBox="0 0 29 29"><circle cx="14.5" cy="14.5" r="14.5" fill="#d8bd2c"/><path d="M14.5 5L22.5 13H18.5V15H10.5V13H6.5Z" fill="#000"/><rect x="10.5" y="16.5" width="8" height="2" fill="#000"/><rect x="10.5" y="20" width="8" height="2" fill="#000"/><rect x="10.5" y="23.5" width="8" height="2" fill="#000"/></svg>
<div class="stat" style="left:1614px;color:#d8bd2c">885</div>
<svg style="left:1702px;top:10px" width="29" height="29" viewBox="0 0 29 29"><circle cx="14.5" cy="14.5" r="14.5" fill="#2dc28a"/><path d="M18.5 9.5C17.8 8.2 16.4 7.6 14.6 7.6C12.3 7.6 10.9 8.8 10.9 10.6C10.9 14.6 18.6 13.2 18.6 17.6C18.6 19.6 17 21 14.5 21C12.6 21 11 20.2 10.3 18.8M14.5 5V7.6M14.5 21V24" stroke="#000" stroke-width="2.5" fill="none"/></svg>
<div class="stat" style="left:1736px;color:#2dc28a;letter-spacing:.6px">628967</div>
<div class="a" style="left:1874px;top:5px;width:39px;height:39px;background:#fff;border-radius:3px"></div>
<svg style="left:1874px;top:5px" width="39" height="39" viewBox="0 0 39 39"><path d="M14.2 10.8A11 11 0 1 0 24.8 10.8" stroke="#000" stroke-width="2.8" fill="none" stroke-linecap="round"/><path d="M19.4 9V19.5" stroke="#000" stroke-width="2.8" stroke-linecap="round"/></svg>

<div id="taskbar" class="a"></div>
<svg style="left:0;top:1030px" width="60" height="50" viewBox="0 1030 60 50"><g fill="#fff"><circle cx="11.7" cy="1042.2" r="3.1"/><circle cx="26.9" cy="1042.2" r="3.1"/><circle cx="41.9" cy="1042.2" r="3.1"/><circle cx="11.7" cy="1057.2" r="3.1"/><circle cx="26.9" cy="1057.2" r="3.1"/><circle cx="41.9" cy="1057.2" r="3.1"/><circle cx="11.7" cy="1072.2" r="3.1"/><circle cx="26.9" cy="1072.2" r="3.1"/><circle cx="41.9" cy="1072.2" r="3.1"/></g></svg>
<div class="t" style="right:39px;top:1036px;font-size:18px;font-weight:bold;color:#fff;text-align:right;letter-spacing:-.1px">SystemDG 4</div>
<div class="t" style="right:40px;top:1056px;font-size:17px;font-weight:bold;color:#fff;text-align:right;letter-spacing:.1px;transform:scaleY(1.05);transform-origin:0 0">Build 2137</div>
<div class="a" style="left:1894px;top:1032px;width:23px;height:48px;background:linear-gradient(#6a6a6e,#555558)"></div>

<!-- desktop icons -->
<div class="icon" style="top:99px;background:#d15050"><svg width="112" height="112" viewBox="0 0 112 112"><rect x="18.7" y="32" width="75.8" height="48.5" fill="#fff"/><path d="M19 33L56 63L94 33M19 80L43 59M94 80L70 59" stroke="#d15050" stroke-width="3" fill="none"/></svg></div>
<div class="lbl" style="left:47px;top:219px;letter-spacing:1px">Mailbox</div>
<div class="icon" style="top:279px;background:#dcc22b"><svg width="112" height="112" viewBox="44.3 35.4 991.4 991.4"><g fill="#fff"><rect x="318" y="256" width="436" height="566" rx="24"/><rect x="735" y="308" width="55" height="78" rx="8"/><rect x="735" y="412" width="55" height="80" rx="8"/><rect x="735" y="518" width="55" height="82" rx="8"/><rect x="735" y="626" width="55" height="76" rx="8"/><rect x="272" y="316" width="86" height="30" rx="12"/><rect x="272" y="420" width="86" height="30" rx="12"/><rect x="272" y="525" width="86" height="30" rx="12"/><rect x="272" y="627" width="86" height="30" rx="12"/><rect x="272" y="730" width="86" height="30" rx="12"/></g><g fill="#b9a43a"><rect x="418" y="345" width="290" height="24"/><rect x="418" y="408" width="290" height="24"/><rect x="418" y="470" width="290" height="24"/><rect x="418" y="531" width="290" height="24"/><rect x="418" y="593" width="290" height="24"/><rect x="418" y="655" width="290" height="24"/><rect x="418" y="718" width="290" height="24"/></g></svg></div>
<div class="lbl" style="left:38px;top:399px">Organizer</div>
<div class="icon" style="top:459px;background:#70a9d9"><svg width="112" height="112" viewBox="44.3 35.4 991.4 991.4"><g fill="#fff"><g transform="translate(400,345) rotate(45)"><rect x="-105" y="-62" width="230" height="124"/><rect x="-118" y="-90" width="28" height="180" rx="10"/><rect x="-72" y="-90" width="28" height="180" rx="10"/><rect x="-26" y="-86" width="28" height="172" rx="10"/></g><g transform="translate(680,345) rotate(-45)"><rect x="-125" y="-62" width="230" height="124"/><rect x="90" y="-90" width="28" height="180" rx="10"/><rect x="44" y="-90" width="28" height="180" rx="10"/><rect x="-2" y="-86" width="28" height="172" rx="10"/></g><circle cx="530" cy="545" r="165" fill="#70a9d9"/><path d="M530 380 H800 Q855 380 855 450 V470 H890 V525 H865 V565 H890 V620 H855 V640 Q855 700 790 700 H530 Z" fill="#70a9d9"/><circle cx="530" cy="545" r="148"/><path d="M530 458 H795 Q838 458 838 500 V488 H875 V528 H852 V562 H875 V602 H838 V605 Q838 648 795 648 H530 Z"/></g><circle cx="530" cy="552" r="50" fill="#70a9d9"/><g transform="translate(268,672) rotate(17)"><g fill="#70a9d9"><circle r="98"/><rect x="30" y="-62" width="500" height="124" rx="62"/></g><g fill="#fff"><circle r="78"/><rect x="30" y="-45" width="485" height="90" rx="45"/></g><rect x="-110" y="-27" width="95" height="54" rx="27" fill="#70a9d9"/><rect x="-110" y="-27" width="50" height="54" fill="#70a9d9"/><rect x="150" y="-6" width="320" height="12" rx="6" fill="#70a9d9"/></g></svg></div>
<div class="lbl" style="left:8px;top:579px">Tanks Part Shop</div>
<div class="icon" style="top:639px;background:#2ec58b"><svg width="112" height="112" viewBox="44.3 35.4 991.4 991.4"><g fill="#fff"><path d="M540 256L802 398V462H278V398Z"/><rect x="315" y="460" width="455" height="232"/><rect x="285" y="690" width="510" height="32"/><rect x="250" y="720" width="580" height="48"/></g><g fill="#2ec58b"><path d="M540 330L668 402H412Z"/><rect x="365" y="490" width="80" height="198"/><rect x="498" y="490" width="80" height="198"/><rect x="632" y="490" width="80" height="198"/></g></svg></div>
<div class="lbl" style="left:60px;top:759px">Bank</div>
<div class="icon" style="top:819px;background:#cf893e"><svg width="112" height="112" viewBox="44.3 35.4 991.4 991.4"><g fill="#fff"><path d="M545 248L812 398H283Z"/><rect x="300" y="406" width="96" height="24"/><rect x="700" y="406" width="96" height="24"/><rect x="315" y="428" width="66" height="270"/><rect x="715" y="428" width="66" height="270"/><rect x="300" y="692" width="96" height="22"/><rect x="700" y="692" width="96" height="22"/><rect x="283" y="722" width="532" height="50"/><rect x="470" y="472" width="152" height="78" rx="4"/><rect x="405" y="560" width="290" height="120" rx="6"/><rect x="398" y="588" width="64" height="126" rx="6"/><rect x="640" y="588" width="62" height="126" rx="6"/></g><circle cx="545" cy="457" r="20" fill="none" stroke="#fff" stroke-width="9"/><path d="M545 482V515" stroke="#cf893e" stroke-width="10" stroke-linecap="round"/><g fill="#cf893e"><rect x="462" y="595" width="12" height="120"/><rect x="628" y="595" width="12" height="120"/></g></svg></div>
<div class="lbl" style="left:20px;top:939px">Tank Museum</div>

<!-- window -->
<div class="a" style="left:322px;top:171px;width:1276px;height:28px;background:linear-gradient(#c64c4c,#9e3b3b)"></div>
<div class="t" style="left:0;width:1920px;text-align:center;top:176px;font-size:17px;font-weight:bold;color:#fff">Mailbox</div>
<svg style="left:1572px;top:174px" width="22" height="22" viewBox="0 0 22 22"><path d="M3 3L19 19M19 3L3 19" stroke="#fff" stroke-width="3.6"/></svg>
<div class="a" style="left:322px;top:199px;width:1276px;height:42px;background:#2c3034"></div>
<svg style="left:336px;top:208px" width="21" height="22" viewBox="0 0 21 22"><rect x="7.9" y="0" width="4.4" height="8" fill="#fff"/><path d="M4.9 7.4H15.1L10 13.7Z" fill="#fff"/><path d="M1.85 12.9V19.3H18.15V12.9" stroke="#fff" stroke-width="3.7" fill="none"/></svg>
<div class="t" style="left:368px;top:209px;font-size:18px;color:#fff;letter-spacing:.25px;transform:scaleY(1.07);transform-origin:0 0">Check for new emails</div>

<!-- folder panel -->
<div class="a" style="left:322px;top:241px;width:274px;height:669px;background:#fff"></div>
<svg style="left:339px;top:259px" width="14" height="9" viewBox="0 0 14 9"><path d="M0.4 0.6H13L6.7 8.7Z" fill="#111"/></svg>
<div class="t" style="left:363.5px;top:254px;font-size:18px;color:#111;letter-spacing:.1px">Folders</div>
<div class="fitem" style="top:288px"><svg class="fic" width="18" height="17" viewBox="0 0 18 17"><path d="M1.1 15V2.2Q1.1 1.1 2.2 1.1H7.2Q8 1.1 8.6 1.9L9.4 2.9Q10 3.6 10.8 3.6H14.3Q15.2 3.6 15.4 4.2" fill="none" stroke="#707070" stroke-width="1.5"/><rect x="3.2" y="5.6" width="13.4" height="9.4" rx="1" fill="#000"/><path d="M1.1 14.2Q1.1 15 2 15H3.4" fill="none" stroke="#707070" stroke-width="1.5"/></svg><span>All contracts</span></div>
<div class="fitem" style="top:332px"><svg class="fic" width="18" height="17" viewBox="0 0 18 17"><path d="M1.1 15V2.2Q1.1 1.1 2.2 1.1H7.2Q8 1.1 8.6 1.9L9.4 2.9Q10 3.6 10.8 3.6H14.3Q15.2 3.6 15.4 4.2" fill="none" stroke="#707070" stroke-width="1.5"/><rect x="3.2" y="5.6" width="13.4" height="9.4" rx="1" fill="#000"/><path d="M1.1 14.2Q1.1 15 2 15H3.4" fill="none" stroke="#707070" stroke-width="1.5"/></svg><span>Available contracts</span></div>
<div class="fitem" style="top:376px"><svg class="fic" width="18" height="17" viewBox="0 0 18 17"><path d="M1.1 15V2.2Q1.1 1.1 2.2 1.1H7.2Q8 1.1 8.6 1.9L9.4 2.9Q10 3.6 10.8 3.6H14.3Q15.2 3.6 15.4 4.2" fill="none" stroke="#707070" stroke-width="1.5"/><rect x="3.2" y="5.6" width="13.4" height="9.4" rx="1" fill="#000"/><path d="M1.1 14.2Q1.1 15 2 15H3.4" fill="none" stroke="#707070" stroke-width="1.5"/></svg><span>Active contracts</span></div>
<div class="fitem" style="top:420px"><svg class="fic" width="18" height="17" viewBox="0 0 18 17"><path d="M1.1 15V2.2Q1.1 1.1 2.2 1.1H7.2Q8 1.1 8.6 1.9L9.4 2.9Q10 3.6 10.8 3.6H14.3Q15.2 3.6 15.4 4.2" fill="none" stroke="#707070" stroke-width="1.5"/><rect x="3.2" y="5.6" width="13.4" height="9.4" rx="1" fill="#000"/><path d="M1.1 14.2Q1.1 15 2 15H3.4" fill="none" stroke="#707070" stroke-width="1.5"/></svg><span>Finished contracts</span></div>
<div class="fitem" style="top:464px"><svg class="fic" width="18" height="17" viewBox="0 0 18 17"><path d="M1.1 15V2.2Q1.1 1.1 2.2 1.1H7.2Q8 1.1 8.6 1.9L9.4 2.9Q10 3.6 10.8 3.6H14.3Q15.2 3.6 15.4 4.2" fill="none" stroke="#707070" stroke-width="1.5"/><rect x="3.2" y="5.6" width="13.4" height="9.4" rx="1" fill="#000"/><path d="M1.1 14.2Q1.1 15 2 15H3.4" fill="none" stroke="#707070" stroke-width="1.5"/></svg><span>Cancelled contracts</span></div>
<div class="fitem" style="top:508px"><svg class="fic" width="18" height="17" viewBox="0 0 18 17"><path d="M1.1 15V2.2Q1.1 1.1 2.2 1.1H7.2Q8 1.1 8.6 1.9L9.4 2.9Q10 3.6 10.8 3.6H14.3Q15.2 3.6 15.4 4.2" fill="none" stroke="#707070" stroke-width="1.5"/><rect x="3.2" y="5.6" width="13.4" height="9.4" rx="1" fill="#000"/><path d="M1.1 14.2Q1.1 15 2 15H3.4" fill="none" stroke="#707070" stroke-width="1.5"/></svg><span>Failed contracts</span></div>

<!-- right panel frame -->
<div class="a" style="left:596px;top:241px;width:1002px;height:669px;background:#c6c6c6"></div>
<div class="a" style="left:596px;top:241px;width:1.5px;height:664px;background:#b4b4b4"></div>
<div class="a" style="left:602px;top:241px;width:990px;height:309px;background:#fff"></div>
<div class="a" style="left:602px;top:243px;width:990px;height:39px;background:#eeeeee"></div>
<div class="hd" style="left:653px">Subject</div>
<div class="hd" style="left:1061px;letter-spacing:.6px">From</div>
<div class="hd" style="left:1397px;letter-spacing:.5px">Date</div>
<div class="row" style="top:290px;height:40px;background:#6fa3cc">
<svg class="ric" width="29" height="29" viewBox="0 0 29 29"><rect x="0" y="0" width="29" height="29" fill="#000"/><rect x="3" y="3" width="23" height="23" rx="3" fill="#6fa3cc"/><rect x="6" y="5" width="17" height="19" fill="#000"/><rect x="7.8" y="8" width="13.2" height="2.9" fill="#6fa3cc"/><rect x="7.8" y="13" width="13.2" height="2.9" fill="#6fa3cc"/><rect x="7.8" y="18.2" width="13.2" height="2.9" fill="#6fa3cc"/></svg>
<svg class="rst" width="25" height="24" viewBox="-1 -1 25 24"><path d="M11.50,0.50 L14.18,8.44 L22.03,8.72 L15.83,13.91 L18.01,22.03 L11.50,17.30 L4.99,22.03 L7.17,13.91 L0.97,8.72 L8.82,8.44Z" fill="#f4f4f4" stroke="#7c7c7c" stroke-width="1.6" stroke-linejoin="round"/></svg>
<div class="rtx" style="letter-spacing:.25px">NEED HELP!</div>
</div>
<div class="row" style="top:334px;height:40px;background:#ececec">
<svg class="ric" width="29" height="29" viewBox="0 0 29 29"><rect x="0" y="0" width="29" height="29" fill="#000"/><rect x="2.7" y="2" width="23.7" height="24.7" rx="2.5" fill="#ececec"/><rect x="6" y="5" width="16.7" height="18.2" fill="#000"/><rect x="9" y="9.3" width="11" height="1.8" fill="#ececec"/><rect x="9.2" y="12.8" width="1.7" height="1.6" fill="#ececec"/><rect x="9.2" y="15.9" width="1.7" height="1.6" fill="#ececec"/><rect x="9.2" y="19.1" width="1.7" height="1.6" fill="#ececec"/><rect x="11" y="11.9" width="15.4" height="15.6" rx="1" fill="#000"/><rect x="12.6" y="13.2" width="13.3" height="13.5" rx="2" fill="#ececec"/><path d="M15 20H24.3M19.5 15.3V24.6" stroke="#000" stroke-width="1.9"/></svg>
<svg class="rst" width="25" height="24" viewBox="-1 -1 25 24"><path d="M11.50,0.50 L14.18,8.44 L22.03,8.72 L15.83,13.91 L18.01,22.03 L11.50,17.30 L4.99,22.03 L7.17,13.91 L0.97,8.72 L8.82,8.44Z" fill="#ececec" stroke="#7c7c7c" stroke-width="1.6" stroke-linejoin="round"/></svg>
<div class="rtx">Repair contract offer</div>
<svg class="rx" width="29" height="29" viewBox="0 0 29 29"><rect width="29" height="29" fill="#000"/><path d="M6.5 6.5L22.5 22.5M22.5 6.5L6.5 22.5" stroke="#fff" stroke-width="3.8"/></svg>
</div>
<div class="row" style="top:378px;height:40px;background:#ececec">
<svg class="ric" width="29" height="29" viewBox="0 0 29 29"><rect x="0" y="0" width="29" height="29" fill="#000"/><rect x="2.7" y="2" width="23.7" height="24.7" rx="2.5" fill="#ececec"/><rect x="6" y="5" width="16.7" height="18.2" fill="#000"/><rect x="9" y="9.3" width="11" height="1.8" fill="#ececec"/><rect x="9.2" y="12.8" width="1.7" height="1.6" fill="#ececec"/><rect x="9.2" y="15.9" width="1.7" height="1.6" fill="#ececec"/><rect x="9.2" y="19.1" width="1.7" height="1.6" fill="#ececec"/><rect x="11" y="11.9" width="15.4" height="15.6" rx="1" fill="#000"/><rect x="12.6" y="13.2" width="13.3" height="13.5" rx="2" fill="#ececec"/><path d="M15 20H24.3M19.5 15.3V24.6" stroke="#000" stroke-width="1.9"/></svg>
<svg class="rst" width="25" height="24" viewBox="-1 -1 25 24"><path d="M11.50,0.50 L14.18,8.44 L22.03,8.72 L15.83,13.91 L18.01,22.03 L11.50,17.30 L4.99,22.03 L7.17,13.91 L0.97,8.72 L8.82,8.44Z" fill="#f9a91b" stroke="#f9a91b" stroke-width="1" stroke-linejoin="round"/></svg>
<div class="rtx">Put primer on our tank</div>
<svg class="rx" width="29" height="29" viewBox="0 0 29 29"><rect width="29" height="29" fill="#000"/><path d="M6.5 6.5L22.5 22.5M22.5 6.5L6.5 22.5" stroke="#fff" stroke-width="3.8"/></svg>
</div>
<div class="row" style="top:422px;height:40px;background:#5494e0">
<svg class="ric" width="29" height="29" viewBox="0 0 29 29"><rect x="0" y="0" width="29" height="29" fill="#000"/><rect x="2.7" y="2" width="23.7" height="24.7" rx="2.5" fill="#5494e0"/><rect x="6" y="5" width="16.7" height="18.2" fill="#000"/><rect x="9" y="9.3" width="11" height="1.8" fill="#5494e0"/><rect x="9.2" y="12.8" width="1.7" height="1.6" fill="#5494e0"/><rect x="9.2" y="15.9" width="1.7" height="1.6" fill="#5494e0"/><rect x="9.2" y="19.1" width="1.7" height="1.6" fill="#5494e0"/><rect x="11" y="11.9" width="15.4" height="15.6" rx="1" fill="#000"/><rect x="12.6" y="13.2" width="13.3" height="13.5" rx="2" fill="#5494e0"/><path d="M15 20H24.3M19.5 15.3V24.6" stroke="#000" stroke-width="1.9"/></svg>
<svg class="rst" width="25" height="24" viewBox="-1 -1 25 24"><path d="M11.50,0.50 L14.18,8.44 L22.03,8.72 L15.83,13.91 L18.01,22.03 L11.50,17.30 L4.99,22.03 L7.17,13.91 L0.97,8.72 L8.82,8.44Z" fill="#f4f4f4" stroke="#7c7c7c" stroke-width="1.6" stroke-linejoin="round"/></svg>
<div class="rtx">Need some help with renovation</div>
<svg class="rx" width="29" height="29" viewBox="0 0 29 29"><rect width="29" height="29" fill="#000"/><path d="M6.5 6.5L22.5 22.5M22.5 6.5L6.5 22.5" stroke="#fff" stroke-width="3.8"/></svg>
</div>
<div class="row" style="top:466px;height:40px;background:#ececec">
<svg class="ric" width="29" height="29" viewBox="0 0 29 29"><rect x="0" y="0" width="29" height="29" fill="#000"/><rect x="2.7" y="2" width="23.7" height="24.7" rx="2.5" fill="#ececec"/><rect x="6" y="5" width="16.7" height="18.2" fill="#000"/><rect x="9" y="9.3" width="11" height="1.8" fill="#ececec"/><rect x="9.2" y="12.8" width="1.7" height="1.6" fill="#ececec"/><rect x="9.2" y="15.9" width="1.7" height="1.6" fill="#ececec"/><rect x="9.2" y="19.1" width="1.7" height="1.6" fill="#ececec"/><rect x="11" y="11.9" width="15.4" height="15.6" rx="1" fill="#000"/><rect x="12.6" y="13.2" width="13.3" height="13.5" rx="2" fill="#ececec"/><path d="M15 20H24.3M19.5 15.3V24.6" stroke="#000" stroke-width="1.9"/></svg>
<svg class="rst" width="25" height="24" viewBox="-1 -1 25 24"><path d="M11.50,0.50 L14.18,8.44 L22.03,8.72 L15.83,13.91 L18.01,22.03 L11.50,17.30 L4.99,22.03 L7.17,13.91 L0.97,8.72 L8.82,8.44Z" fill="#ececec" stroke="#7c7c7c" stroke-width="1.6" stroke-linejoin="round"/></svg>
<div class="rtx">Repair contract offer</div>
<svg class="rx" width="29" height="29" viewBox="0 0 29 29"><rect width="29" height="29" fill="#000"/><path d="M6.5 6.5L22.5 22.5M22.5 6.5L6.5 22.5" stroke="#fff" stroke-width="3.8"/></svg>
</div>
<div class="row" style="top:510px;height:37px;background:#ececec">
<svg class="ric" width="29" height="29" viewBox="0 0 29 29"><rect x="0" y="0" width="29" height="29" fill="#000"/><rect x="2.7" y="2" width="23.7" height="24.7" rx="2.5" fill="#ececec"/><rect x="6" y="5" width="16.7" height="18.2" fill="#000"/><rect x="9" y="9.3" width="11" height="1.8" fill="#ececec"/><rect x="9.2" y="12.8" width="1.7" height="1.6" fill="#ececec"/><rect x="9.2" y="15.9" width="1.7" height="1.6" fill="#ececec"/><rect x="9.2" y="19.1" width="1.7" height="1.6" fill="#ececec"/><rect x="11" y="11.9" width="15.4" height="15.6" rx="1" fill="#000"/><rect x="12.6" y="13.2" width="13.3" height="13.5" rx="2" fill="#ececec"/><path d="M15 20H24.3M19.5 15.3V24.6" stroke="#000" stroke-width="1.9"/></svg>
<svg class="rst" width="25" height="24" viewBox="-1 -1 25 24"><path d="M11.50,0.50 L14.18,8.44 L22.03,8.72 L15.83,13.91 L18.01,22.03 L11.50,17.30 L4.99,22.03 L7.17,13.91 L0.97,8.72 L8.82,8.44Z" fill="#ececec" stroke="#7c7c7c" stroke-width="1.6" stroke-linejoin="round"/></svg>
<div class="rtx">Need some help with renovation</div>
<svg class="rx" width="29" height="29" viewBox="0 0 29 29"><rect width="29" height="29" fill="#000"/><path d="M6.5 6.5L22.5 22.5M22.5 6.5L6.5 22.5" stroke="#fff" stroke-width="3.8"/></svg>
</div>
<div class="a" style="left:1579px;top:285px;width:9px;height:256px;background:#858585"></div>
<div class="a" style="left:1579px;top:540px;width:9px;height:8px;background:#2f3336"></div>

<!-- details -->
<div class="a" style="left:602px;top:557px;width:990px;height:348px;background:#fff"></div>
<div class="dt" style="left:625px;top:577px">From</div>
<div class="dt" style="left:759px;top:577px">Greg</div>
<div class="dt" style="left:625px;top:607px">To:</div>
<div class="dt" style="left:759px;top:607px">Tank Mechanic</div>
<div class="dt" style="left:625px;top:637px">Title:</div>
<div class="dt" style="left:758px;top:637px;letter-spacing:.66px">Need some help with renovation</div>
<svg style="left:1448px;top:568px" width="21" height="20" viewBox="0 0 21 20"><path d="M10.5 1.3L12.9 7.7L19.6 8L14.3 12.2L16.2 18.7L10.5 15L4.8 18.7L6.7 12.2L1.4 8L8.1 7.7Z" fill="none" stroke="#777" stroke-width="1.3" stroke-linejoin="round"/></svg>
<div class="a" style="left:1478px;top:568px;width:91px;height:91px;background:#dedede;overflow:hidden"><svg width="91" height="91" viewBox="0 0 91 91"><path d="M45.5 5C36 5 30.5 12 30.5 22C30.5 25 29.5 27 30 30C30.7 33 31.5 33 32 35C34 43 39 48 45.5 48C52 48 57 43 59 35C59.5 33 60.3 33 61 30C61.5 27 60.5 25 60.5 22C60.5 12 55 5 45.5 5ZM36 47C34 50 30 52 26 54C18 57 15 62 13 70C12 78 10.5 85 10 91H81C80.5 85 79 78 78 70C76 62 73 57 65 54C61 52 57 50 55 47C53 50 50 52 45.5 52C41 52 38 50 36 47Z" fill="#fff"/></svg></div>
<div class="a" style="left:625px;top:672px;width:944px;height:3px;background:#ececec"></div>
<div class="dt" style="left:624px;top:690px">Hey,</div>
<div class="dt" style="left:624px;top:730px;letter-spacing:.38px">I have a M10 Wolverine in need of renovation.</div>
<div class="dt" style="left:624px;top:770px">Can you help me?</div>
<div class="dt" style="left:624px;top:810px">Sincerely,</div>
<div class="dt" style="left:624px;top:831px">Greg</div>
<div class="dt" style="left:1103.5px;top:689.5px;letter-spacing:.75px">Potential money:</div>
<div class="dt" style="left:1103.5px;top:720px;letter-spacing:.75px">Reputation:</div>
<div class="dt" style="left:1103.5px;top:751px;letter-spacing:.45px">Required repairs:</div>
<div class="dt" style="right:397px;top:689.5px;text-align:right;letter-spacing:.1px">34000$</div>
<div class="dt" style="right:397px;top:720px;text-align:right">59</div>
<div class="dt" style="right:397px;top:751px;text-align:right">High</div>
<div class="btn" style="left:1066px">Accept the order</div>
<div class="btn" style="left:1323px">Decline the order</div>

<!-- cursor -->
<svg style="left:1121px;top:439px" width="32" height="48" viewBox="0 0 32 48"><path d="M2.6 2.4V39.3L11.2 33.2L16.8 44.3L22 41.6L18.2 31L27.9 28.8Z" fill="#fff" stroke="#1a1a1a" stroke-width="1.4" stroke-linejoin="round"/><path d="M2.6 2.6V39" stroke="#000" stroke-width="2"/></svg>

</body></html>
